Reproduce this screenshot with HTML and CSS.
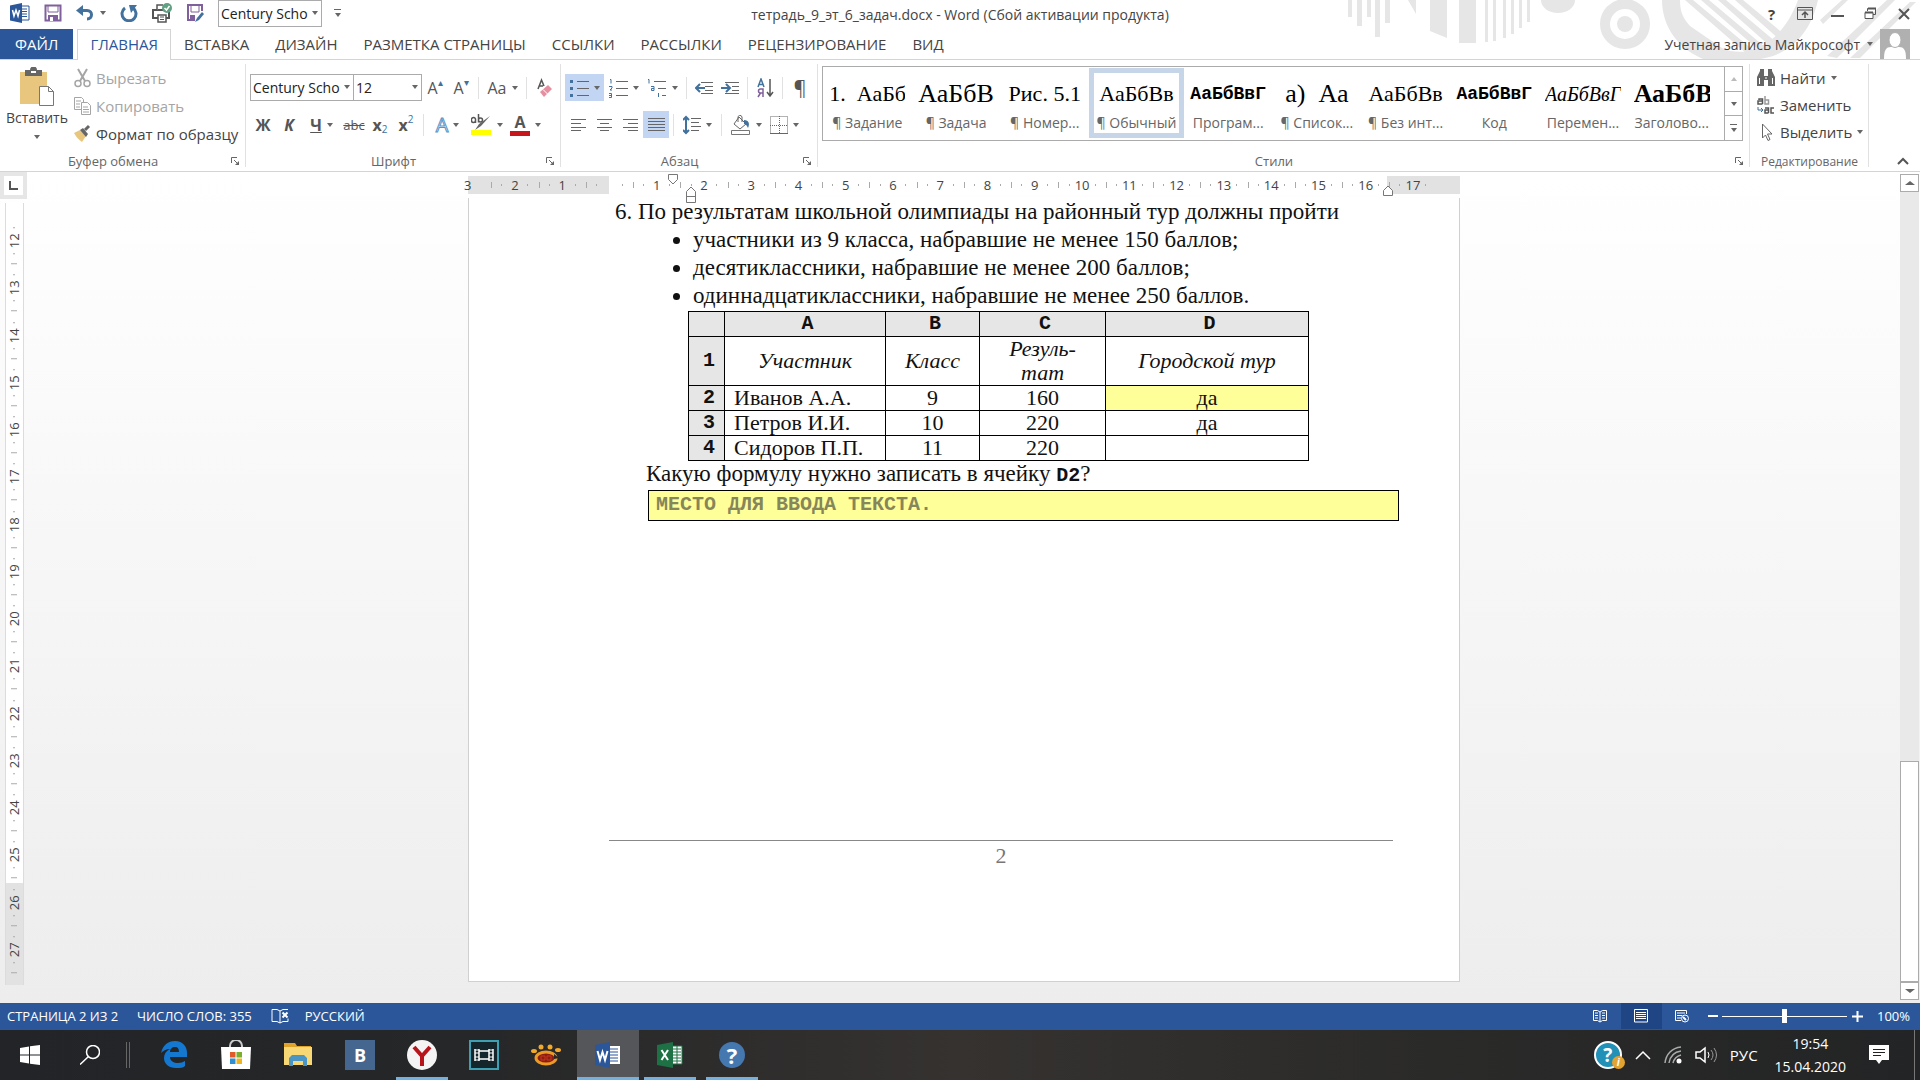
FILE: index.html
```html
<!DOCTYPE html>
<html lang="ru">
<head>
    <meta charset="UTF-8">
    <meta name="viewport" content="width=device-width, initial-scale=1.0">
    <title>тетрадь_9_эт_6_задач.docx - Word</title>
    <link rel="stylesheet" href="styles.css">
</head>
<body>
    <header class="top">
        <svg class="top-art" width="580" height="60" viewBox="0 0 580 60">
            <g fill="#e6e6e6">
                <path d="M8 0h4v17H8zM17 0h5v26h-5zM27 0h4v17h-4zM35 0h5v37h-5zM45 0h5v23h-5zM68 0h8v14zM90 0h17v38l-17-7zM119 0h17v43h-17zM145 0h3v42h-3zM153 0h3v41h-3zM163 0h3v38h-3zM171 0h3v34h-3zM179 0h3v28h-3zM187 0h3v22h-3z"/>
                <path d="M201 0h34a17 13 0 0 1-34 0z"/>
                <circle cx="285" cy="24" r="8"/>
                <path d="M322 0h18c0 12 3 18 10 26l32 22c26 12 60-4 76-48h20c-10 44-40 60-70 60h-42c-28-10-44-34-44-60z"/>
                <path d="M345 0h8l60 50-6 4zM361 0h8l56 47-5 4zM378 0h8l50 42-5 5zM395 0h8l42 35-5 5zM480 20l22-20h6l-25 24zM487 56l60-56h8l-58 58zM510 58l60-56h6l-56 56z"/>
            </g>
            <circle cx="285" cy="24" r="20" fill="none" stroke="#e6e6e6" stroke-width="10"/>
        </svg>

        <div class="titlebar">
            <div class="quick">
                <svg width="20" height="20" viewBox="0 0 20 20"><path d="M11 3h8v14h-8z" fill="#fff" stroke="#2b579a"/><path d="M12 6h5M12 8.500h5M12 11h5M12 13.500h5" stroke="#2b579a"/><path d="M0 2.500L12 0v20L0 17.500z" fill="#2b579a"/><path d="M2.500 7l1.500 6 2-6 2 6 1.500-6" fill="none" stroke="#fff" stroke-width="1.500"/></svg>
                <button class="qbtn" aria-label="Сохранить"><svg width="18" height="18" viewBox="0 0 18 18"><path d="M1.500 1.500h15v15h-15z" fill="#fff" stroke="#80609c" stroke-width="2"/><path d="M4 1v7h10V1" fill="none" stroke="#80609c"/><path d="M4 11h10v6H4z" fill="#80609c"/><path d="M6 13h3v4H6z" fill="#fff"/></svg></button>
                <button class="qbtn undo" aria-label="Отменить"><svg width="18" height="16" viewBox="0 0 18 16"><path d="M3 5.500h8c6 0 6 8.500 0 8.500" fill="none" stroke="#41719c" stroke-width="3"/><path d="M0 5.500L7 0v11z" fill="#41719c"/></svg><i class="arr"></i></button>
                <button class="qbtn" aria-label="Повторить"><svg width="18" height="18" viewBox="0 0 18 18"><path d="M5 4a7 7 0 1 0 8 0" fill="none" stroke="#41719c" stroke-width="3"/><path d="M9 1h8L11 9z" fill="#41719c"/></svg></button>
                <button class="qbtn" aria-label="Печать"><svg width="20" height="20" viewBox="0 0 20 20"><path d="M1 7h16v8H1z" fill="none" stroke="#555" stroke-width="2"/><path d="M5 7V2h6M6 12h8v7H6z" fill="#fff" stroke="#555" stroke-width="1.500"/><path d="M8 14h4M8 16.500h4" stroke="#555"/><circle cx="15" cy="5" r="5" fill="#5fa182"/><path d="M12.500 5l2 2 3-4" fill="none" stroke="#fff" stroke-width="1.500"/></svg></button>
                <button class="qbtn" aria-label="Сохранить как"><svg width="18" height="20" viewBox="0 0 18 20"><path d="M9 17H2V2h14v6" fill="none" stroke="#80609c" stroke-width="2"/><path d="M5 2v7h8V2" fill="none" stroke="#80609c"/><path d="M4 12h5v5H4z" fill="#80609c"/><path d="M9 19l2-4 5-6 2 2-5 6z" fill="#41719c"/></svg></button>
                <span class="pick pick-font"><select aria-label="Шрифт"><option>Century Scho</option></select></span>
                <button class="qbtn more" aria-label="Настройка панели"><i class="bar"></i><i class="arr"></i></button>
            </div>
            <div class="doc-title">тетрадь_9_эт_6_задач.docx - Word (Сбой активации продукта)</div>
            <div class="window-buttons">
                <button aria-label="Справка"><b>?</b></button>
                <button aria-label="Параметры ленты"><svg width="16" height="13" viewBox="0 0 16 13"><path d="M.5.5h15v12H.5zM.5 3h15" fill="none" stroke="#555"/><path d="M8 11V6M5 8l3-3 3 3" fill="none" stroke="#555" stroke-width="1.500"/></svg></button>
                <button aria-label="Свернуть"><svg width="13" height="13"><path d="M0 9h13" stroke="#555" stroke-width="2"/></svg></button>
                <button aria-label="Восстановить"><svg width="13" height="13" viewBox="0 0 13 13"><path d="M3.500 4V1.500h8v6H9" fill="none" stroke="#555"/><path d="M1 5.500h8v6H1z" fill="#fff" stroke="#555"/><path d="M1 5.500h8M4 1.500h8" stroke="#555" stroke-width="2"/></svg></button>
                <button aria-label="Закрыть"><svg width="12" height="12"><path d="M1 1l10 10M11 1L1 11" stroke="#555" stroke-width="2"/></svg></button>
            </div>
        </div>

        <nav class="tabs">
            <a href="#" class="file">ФАЙЛ</a>
            <a href="#" class="current">ГЛАВНАЯ</a>
            <a href="#">ВСТАВКА</a>
            <a href="#">ДИЗАЙН</a>
            <a href="#">РАЗМЕТКА СТРАНИЦЫ</a>
            <a href="#">ССЫЛКИ</a>
            <a href="#">РАССЫЛКИ</a>
            <a href="#">РЕЦЕНЗИРОВАНИЕ</a>
            <a href="#">ВИД</a>
            <button class="account">Учетная запись Майкрософт <i class="arr"></i></button>
            <svg class="avatar" width="30" height="30" viewBox="0 0 30 30"><path d="M0 0h30v30H0z" fill="#b0b0b0"/><path d="M4 30c0-9 2-12 7-12h8c5 0 7 3 7 12z" fill="#fff"/><ellipse cx="15" cy="11" rx="6" ry="7.500" fill="#fff" stroke="#b0b0b0"/></svg>
        </nav>
    </header>

    <section class="ribbon">
        <div class="group clipboard">
            <div class="clip-body">
                <button class="paste">
                    <svg width="36" height="40" viewBox="0 0 36 40"><path d="M1 5h27v32H1z" fill="#e8c67e"/><path d="M6 3h5a3.500 3.500 0 0 1 7 0h5v6H6z" fill="#666"/><path d="M12 4h5v2h-5z" fill="#fff"/><path d="M20.500 19.500h9l5 5v14h-14z" fill="#fff" stroke="#777"/><path d="M29.500 19.500v5h5" fill="none" stroke="#777"/></svg>
                    <span>Вставить</span>
                    <i class="arr"></i>
                </button>
                <div class="stack">
                    <button class="line off"><svg width="17" height="20" viewBox="0 0 17 20"><path d="M4 1l7 12M13 1L6 13" stroke="#a5a5a5" stroke-width="2"/><circle cx="4" cy="15.500" r="3" fill="none" stroke="#a5a5a5" stroke-width="1.500"/><circle cx="13" cy="15.500" r="3" fill="none" stroke="#a5a5a5" stroke-width="1.500"/></svg>Вырезать</button>
                    <button class="line off"><svg width="17" height="20" viewBox="0 0 17 20"><path d="M.5 1.500h7l2 2v10h-9z" fill="#fff" stroke="#a5a5a5"/><path d="M7.500 6.500h6l3 3v9h-9z" fill="#fff" stroke="#a5a5a5"/><path d="M2 5h5M2 8h4M2 11h4M9 11h5M9 13.500h6M9 16h6" stroke="#a5a5a5"/></svg>Копировать</button>
                    <button class="line"><svg width="17" height="20" viewBox="0 0 17 20"><path d="M0 9l6-3 6 6-4 6c-3-2-6-5-8-9z" fill="#e8c67e"/><path d="M6 6l3-2 5 6-2 3z" fill="#666"/><path d="M11 6l4-4" stroke="#666" stroke-width="3"/></svg>Формат по образцу</button>
                </div>
            </div>
            <div class="foot">Буфер обмена<button class="launch" aria-label="Буфер обмена"><svg width="9" height="9"><path d="M.5 6V.5H6M3 3l4 4" fill="none" stroke="#666"/><path d="M8 4v4H4z" fill="#666"/></svg></button></div>
        </div>

        <div class="group font">
            <div class="row">
                <span class="pick pick-font"><select aria-label="Шрифт"><option>Century Scho</option></select></span>
                <span class="pick pick-size"><select aria-label="Размер шрифта"><option>12</option></select></span>
                <button class="tool">A<sup>▴</sup></button>
                <button class="tool">A<sup>▾</sup></button>
                <i class="sep"></i>
                <button class="tool split">Aa<i class="arr"></i></button>
                <i class="sep"></i>
                <button class="tool" aria-label="Очистить формат"><svg width="17" height="20" viewBox="0 0 17 20"><path d="M2 11L5.500 2 8 8M3 8h4" fill="none" stroke="#555" stroke-width="1.500"/><path d="M4 14l8-7 4 4-8 8z" fill="#e58fa0"/><path d="M7 11.500l4.500 4.500" stroke="#fff"/></svg></button>
            </div>
            <div class="row">
                <button class="tool"><b>Ж</b></button>
                <button class="tool"><b><em>К</em></b></button>
                <button class="tool split"><b><u>Ч</u></b><i class="arr"></i></button>
                <button class="tool strike"><s>abc</s></button>
                <button class="tool"><b>x</b><sub>2</sub></button>
                <button class="tool"><b>x</b><sup>2</sup></button>
                <i class="sep"></i>
                <button class="tool split"><span class="glow">A</span><i class="arr"></i></button>
                <button class="tool split" aria-label="Цвет выделения"><svg width="21" height="22" viewBox="0 0 21 22"><path d="M0 16h20v5H0z" fill="#ff0"/><path d="M4.500 5a2 2 0 0 0-4 1.500 2 2 0 0 0 4 0zV9M7.500 0v8.500M7.500 6a2 2 0 1 1 4 0 2 2 0 0 1-4 0" fill="none" stroke="#555" stroke-width="1.500"/><path d="M19 2l-9 10-6 4 4-6z" fill="#666"/></svg><i class="arr"></i></button>
                <button class="tool split"><span class="red">A</span><i class="arr"></i></button>
            </div>
            <div class="foot">Шрифт<button class="launch" aria-label="Шрифт"><svg width="9" height="9"><path d="M.5 6V.5H6M3 3l4 4" fill="none" stroke="#666"/><path d="M8 4v4H4z" fill="#666"/></svg></button></div>
        </div>

        <div class="group para">
            <div class="row">
                <button class="tool split on" aria-label="Маркеры"><svg width="19" height="20"><path d="M7 3.500h12M7 10.500h12M7 17.500h12" stroke="#666"/><path d="M0 2h3v3H0zM0 9h3v3H0zM0 16h3v3H0z" fill="#41719c"/></svg><i class="arr"></i></button>
                <button class="tool split" aria-label="Нумерация"><svg width="19" height="20"><path d="M7 3.500h12M7 10.500h12M7 17.500h12" stroke="#666"/><path d="M1 1.500h1v4M0 8.500h3v1.500l-2 2h2M0 15.500h2.500v4H0M0 17.500h2.500" fill="none" stroke="#41719c"/></svg><i class="arr"></i></button>
                <button class="tool split" aria-label="Многоуровневый список"><svg width="20" height="20"><path d="M7 3.500h12M11 10.500h8M15 17.500h4" stroke="#666"/><path d="M1 1.500h1v4M4 8.500h3v4H4.500v-2H7M11.500 15v4" fill="none" stroke="#41719c"/></svg><i class="arr"></i></button>
                <i class="sep"></i>
                <button class="tool" aria-label="Уменьшить отступ"><svg width="18" height="14"><path d="M6 1.500h12M10 5.500h8M10 9.500h8M6 12.500h12" stroke="#666"/><path d="M1 7h9M5 3L1 7l4 4" fill="none" stroke="#41719c" stroke-width="2"/></svg></button>
                <button class="tool" aria-label="Увеличить отступ"><svg width="18" height="14"><path d="M4 1.500h14M11 5.500h7M11 9.500h7M4 12.500h14" stroke="#666"/><path d="M0 7h8M5 3l4 4-4 4" fill="none" stroke="#41719c" stroke-width="2"/></svg></button>
                <i class="sep"></i>
                <button class="tool" aria-label="Сортировка"><svg width="17" height="20" viewBox="0 0 17 20"><path d="M1 9l3-8 3 8M2 6.500h4" fill="none" stroke="#41719c" stroke-width="1.500"/><path d="M6 19v-8H3.500a2 2 0 0 0 0 4H6M3.500 15L1 19" fill="none" stroke="#80609c" stroke-width="1.500"/><path d="M13 1v17M10 14l3 4 3-4" fill="none" stroke="#555" stroke-width="1.500"/></svg></button>
                <i class="sep"></i>
                <button class="tool pilcrow">¶</button>
            </div>
            <div class="row">
                <button class="tool" aria-label="По левому краю"><svg width="15" height="14"><path d="M0 1.500h15M0 5.500h10M0 9.500h15M0 12.500h10" stroke="#666"/></svg></button>
                <button class="tool" aria-label="По центру"><svg width="15" height="14"><path d="M0 1.500h15M3 5.500h9M0 9.500h15M3 12.500h9" stroke="#666"/></svg></button>
                <button class="tool" aria-label="По правому краю"><svg width="15" height="14"><path d="M0 1.500h15M5 5.500h10M0 9.500h15M5 12.500h10" stroke="#666"/></svg></button>
                <button class="tool on" aria-label="По ширине"><svg width="17" height="14"><path d="M0 .5h17M0 3.500h17M0 6.500h17M0 9.500h17M0 12.500h17" stroke="#666"/></svg></button>
                <i class="sep"></i>
                <button class="tool split" aria-label="Интервал"><svg width="18" height="20"><path d="M8 3.500h10M8 7.500h8M8 11.500h10M8 15.500h8" stroke="#666"/><path d="M3 2v16M0 5l3-3 3 3M0 15l3 3 3-3" fill="none" stroke="#41719c" stroke-width="2"/></svg><i class="arr"></i></button>
                <i class="sep"></i>
                <button class="tool split" aria-label="Заливка"><svg width="21" height="20" viewBox="0 0 21 20"><path d="M1.500 15.500h18v4h-18z" fill="#fff" stroke="#777"/><path d="M9 2l7 7-6 5-6-5z" fill="#fff" stroke="#666"/><path d="M8 7V3a2 2 0 0 1 4-1v5" fill="none" stroke="#666"/><path d="M14 5c5 0 6 4 4 8-1-2-2-4-4-4z" fill="#41719c"/></svg><i class="arr"></i></button>
                <button class="tool split" aria-label="Границы"><svg width="18" height="18"><path d="M.5.5h17v17H.5zM9.500 0v18M0 9.500h18" fill="none" stroke="#666" stroke-dasharray="1 1"/><path d="M0 17.500h18" stroke="#666"/></svg><i class="arr"></i></button>
            </div>
            <div class="foot">Абзац<button class="launch" aria-label="Абзац"><svg width="9" height="9"><path d="M.5 6V.5H6M3 3l4 4" fill="none" stroke="#666"/><path d="M8 4v4H4z" fill="#666"/></svg></button></div>
        </div>

        <div class="group styles">
            <div class="gallery">
                <button class="style"><span class="demo serif">1. &nbsp;АаБб</span><span>¶ Задание</span></button>
                <button class="style"><span class="demo serif large">АаБбВ</span><span>¶ Задача</span></button>
                <button class="style"><span class="demo serif">Рис. 5.1</span><span>¶ Номер...</span></button>
                <button class="style picked"><span class="demo serif">АаБбВв</span><span>¶ Обычный</span></button>
                <button class="style"><span class="demo mono">АаБбВвГ</span><span>Програм...</span></button>
                <button class="style"><span class="demo serif large">а) &nbsp;Аа</span><span>¶ Список...</span></button>
                <button class="style"><span class="demo serif">АаБбВв</span><span>¶ Без инт...</span></button>
                <button class="style"><span class="demo mono">АаБбВвГ</span><span>Код</span></button>
                <button class="style"><span class="demo serif slant">АаБбВвГ</span><span>Перемен...</span></button>
                <button class="style"><span class="demo serif large heavy">АаБбВ</span><span>Заголово...</span></button>
                <div class="gallery-nav">
                    <button aria-label="Вверх"><i class="arr up pale"></i></button>
                    <button aria-label="Вниз"><i class="arr"></i></button>
                    <button aria-label="Все стили"><i class="bar"></i><i class="arr"></i></button>
                </div>
            </div>
            <div class="foot">Стили<button class="launch" aria-label="Стили"><svg width="9" height="9"><path d="M.5 6V.5H6M3 3l4 4" fill="none" stroke="#666"/><path d="M8 4v4H4z" fill="#666"/></svg></button></div>
        </div>

        <div class="group editing">
            <div class="stack">
                <button class="line"><svg width="18" height="18" viewBox="0 0 18 18"><path d="M0 17V8l3-6h4v5h4V2h4l3 6v9h-7v-6H7v6z" fill="#666"/><path d="M3 1h4M11 1h4" stroke="#666" stroke-width="2"/><path d="M2.500 9v6M15.500 9v6M8 9h2" stroke="#fff"/></svg>Найти<i class="arr"></i></button>
                <button class="line"><svg width="18" height="18" viewBox="0 0 18 18"><path d="M5.500 8V3H2v1M5.500 5H1v3h4.500" fill="none" stroke="#555" stroke-width="1.500"/><path d="M8 0v8h3.500V4H8" fill="none" stroke="#999" stroke-width="1.500"/><path d="M1 11v3h5M4 12l2 2-2 2" fill="none" stroke="#41719c"/><path d="M11.500 17v-5H8M11.500 14H8v3h3.500M17 12h-3v5h3" fill="none" stroke="#555" stroke-width="1.500"/></svg>Заменить</button>
                <button class="line"><svg width="18" height="18" viewBox="0 0 18 18"><path d="M5.500 1v14l3-3 2.500 5.500 2-1-2.500-5.500H15z" fill="#fff" stroke="#666"/></svg>Выделить<i class="arr"></i></button>
            </div>
            <div class="foot">Редактирование</div>
        </div>
        <button class="collapse" aria-label="Свернуть ленту"><svg width="12" height="8"><path d="M1 7l5-5 5 5" fill="none" stroke="#555" stroke-width="2"/></svg></button>
    </section>

    <main class="workspace">
        <div class="rail">
            <button class="corner" aria-label="Табуляция"><svg width="9" height="9"><path d="M1 0v8h8" fill="none" stroke="#555" stroke-width="2"/></svg></button>
            <div class="v-ruler">
                <span>12</span><span>13</span><span>14</span><span>15</span><span>16</span><span>17</span><span>18</span><span>19</span><span>20</span><span>21</span><span>22</span><span>23</span><span>24</span><span>25</span><span>26</span><span>27</span>
            </div>
        </div>

        <div class="canvas">
            <div class="h-ruler">
                <div class="marks">
                    <span>3</span><span>2</span><span>1</span><span></span><span>1</span><span>2</span><span>3</span><span>4</span><span>5</span><span>6</span><span>7</span><span>8</span><span>9</span><span>10</span><span>11</span><span>12</span><span>13</span><span>14</span><span>15</span><span>16</span><span>17</span><span></span>
                </div>
                <svg class="indent first" width="12" height="11"><path d="M1.500.5h9v5L6 10 1.500 5.500z" fill="#fff" stroke="#777"/></svg>
                <svg class="indent left" width="12" height="17"><path d="M1.500 5.500L6 1l4.500 4.500v11h-9zM1.500 10.500h9" fill="#fff" stroke="#777"/></svg>
                <svg class="indent right" width="12" height="11"><path d="M1.500 10.500v-5L6 1l4.500 4.500v5z" fill="#fff" stroke="#777"/></svg>
            </div>

            <article class="sheet">
                <p class="task">6. По результатам школьной олимпиады на районный тур должны пройти</p>
                <ul>
                    <li>участники из 9 класса, набравшие не менее 150 баллов;</li>
                    <li>десятиклассники, набравшие не менее 200 баллов;</li>
                    <li>одиннадцатиклассники, набравшие не менее 250 баллов.</li>
                </ul>
                <table>
                    <colgroup><col class="c-n"><col class="c-a"><col class="c-b"><col class="c-c"><col class="c-d"></colgroup>
                    <tr><th></th><th>A</th><th>B</th><th>C</th><th>D</th></tr>
                    <tr class="names"><th>1</th><td>Участник</td><td>Класс</td><td>Резуль-<br>тат</td><td>Городской тур</td></tr>
                    <tr><th>2</th><td class="who">Иванов А.А.</td><td>9</td><td>160</td><td class="answer">да</td></tr>
                    <tr><th>3</th><td class="who">Петров И.И.</td><td>10</td><td>220</td><td>да</td></tr>
                    <tr><th>4</th><td class="who">Сидоров П.П.</td><td>11</td><td>220</td><td></td></tr>
                </table>
                <label class="question" for="formula">Какую формулу нужно записать в ячейку <b>D2</b>?</label>
                <input id="formula" class="formula" type="text" placeholder="МЕСТО ДЛЯ ВВОДА ТЕКСТА.">
                <div class="page-foot">2</div>
            </article>
        </div>

        <div class="scroll">
            <button aria-label="Вверх"><i class="arr up wide"></i></button>
            <div class="track"><div class="thumb"></div></div>
            <button aria-label="Вниз"><i class="arr wide"></i></button>
        </div>
    </main>

    <footer class="status">
        <span>СТРАНИЦА 2 ИЗ 2</span>
        <span>ЧИСЛО СЛОВ: 355</span>
        <svg width="18" height="16" viewBox="0 0 18 16"><path d="M1 1.500h5l3 1.500v12l-3-1.500H1zM9 3l3-1.500h5M9 15l3-1.500h5v-3" fill="none" stroke="#fff"/><path d="M11.500 4.500l5 5M16.500 4.500l-5 5" stroke="#fff" stroke-width="2"/></svg>
        <span>РУССКИЙ</span>
        <div class="views">
            <button aria-label="Режим чтения"><svg width="14" height="14"><path d="M.5 1.500h4L7 3l2.500-1.500h4v10h-4L7 13l-2.500-1.500h-4zM7 3v10M2 4h3M2 6.500h3M2 9h3M9 4h3M9 6.500h3M9 9h3" fill="none" stroke="#fff"/></svg></button>
            <button class="active" aria-label="Разметка страницы"><svg width="14" height="14"><path d="M.5.500h13v12.500H.5zM2 3.500h10M2 5.500h10M2 7.500h10M2 9.500h10" fill="none" stroke="#fff"/></svg></button>
            <button aria-label="Веб-документ"><svg width="14" height="14"><path d="M6 11.500H.5V1.500h11V5M2 4h8M2 6.500h5M2 9h4" fill="none" stroke="#fff"/><circle cx="10" cy="9.500" r="3.500" fill="none" stroke="#fff"/><path d="M8 8l3 3" stroke="#fff" stroke-width="2"/></svg></button>
        </div>
        <button class="zoom-btn" aria-label="Уменьшить"><svg width="10" height="10"><path d="M0 5h10" stroke="#fff" stroke-width="2"/></svg></button>
        <input class="zoom" type="range" min="0" max="100" value="50" aria-label="Масштаб">
        <button class="zoom-btn" aria-label="Увеличить"><svg width="11" height="11"><path d="M0 5.500h11M5.500 0v11" stroke="#fff" stroke-width="2"/></svg></button>
        <span class="percent">100%</span>
    </footer>

    <div class="taskbar">
        <button class="start" aria-label="Пуск"><svg width="20" height="20"><path d="M0 3l9-1.500V9.500H0zM10 1.300L20 0v9.500H10zM0 10.500h9v8L0 17zM10 10.500h10V20l-10-1.300z" fill="#fff"/></svg></button>
        <button class="find" aria-label="Поиск"><svg width="20" height="20"><circle cx="13" cy="7" r="6.500" fill="none" stroke="#fff" stroke-width="1.500"/><path d="M8.500 11.500L0 19.500" stroke="#fff" stroke-width="1.500"/></svg></button>
        <i class="grip"></i>
        <div class="apps">
            <button aria-label="Edge"><svg width="26" height="28" viewBox="0 0 26 28"><path d="M0 12C2 4 7 0 14 0c8 0 12 6 12 12v4H9c0 4 4 6 8 6 3 0 5-1 7-2v5c-2 2-5 2-9 2C8 27 3 23 3 17c0-4 2-7 6-9-4 0-7 2-9 4zM9 11h9c0-3-1-5-4-5s-5 2-5 5z" fill="#1478d0" fill-rule="evenodd"/></svg></button>
            <button aria-label="Store"><svg width="30" height="30" viewBox="0 0 30 30"><path d="M9 9V6a6 6 0 0 1 12 0v3" fill="none" stroke="#ccc" stroke-width="2"/><path d="M0 7h30l-1 22H1z" fill="#fff"/><path d="M9 12h5.500v5.500H9z" fill="#e05a2a"/><path d="M15.500 12H21v5.500h-5.500z" fill="#7aae2c"/><path d="M9 18.500h5.500V24H9z" fill="#2f8fd0"/><path d="M15.500 18.500H21V24h-5.500z" fill="#f0b41e"/></svg></button>
            <button aria-label="Проводник"><svg width="28" height="26" viewBox="0 0 28 26"><path d="M0 1h11l2 3h14v18H0z" fill="#dfa32b"/><path d="M0 5h28v18H0z" fill="#f8d775"/><path d="M5 24v-8l3-3h12l3 3v8h-4v-5H9v5z" fill="#4a95c4"/></svg></button>
            <button aria-label="ВКонтакте"><b class="vk">B</b></button>
            <button class="open" aria-label="Яндекс"><svg width="30" height="30"><circle cx="15" cy="15" r="15" fill="#f4f4f4"/><path d="M7 7l8 9 8-9M15 15v11" fill="none" stroke="#b7141c" stroke-width="4"/></svg></button>
            <button aria-label="Видеоредактор"><svg width="30" height="30"><path d="M1 1h28v28H1z" fill="#14252b" stroke="#3fa0b4" stroke-width="2"/><path d="M6 9v12M10 9v12M20 9v12M24 9v12M10 11h10M10 19h10" stroke="#fff" stroke-width="1.500"/><path d="M6 10h4M6 13h4M6 17h4M6 20h4M20 10h4M20 13h4M20 17h4M20 20h4" stroke="#fff"/></svg></button>
            <button aria-label="GOM"><svg width="30" height="24" viewBox="0 0 30 24"><ellipse cx="15" cy="15" rx="10" ry="6" fill="#8d1d12" stroke="#eb9b26" stroke-width="3"/><path d="M23 11l5 4-5 1z" fill="#26282a"/><path d="M10 13h4v4h-4zM16 13h4v4h-4z" fill="none" stroke="#c4381c"/><g fill="#f0a92c"><ellipse cx="3" cy="8" rx="3" ry="2"/><circle cx="10" cy="4" r="2.500"/><circle cx="19" cy="4" r="2.500"/><ellipse cx="27" cy="7" rx="3" ry="2"/></g></svg></button>
            <button class="open front" aria-label="Word"><svg width="26" height="26" viewBox="0 0 26 26"><path d="M13 4h12v18H13z" fill="#fff"/><path d="M15 7h8M15 10h8M15 13h8M15 16h8M15 19h8" stroke="#2b579a"/><path d="M0 3l15-3v26L0 23z" fill="#2b579a"/><path d="M2.500 9l2.500 9 2.500-8L10 18l2.500-9" fill="none" stroke="#fff" stroke-width="2"/></svg></button>
            <button class="open" aria-label="Excel"><svg width="26" height="26" viewBox="0 0 26 26"><path d="M15 4h10v18H15z" fill="#fff" stroke="#1e7145"/><path d="M16 7h8M16 10h8M16 13h8M16 16h8M16 19h8M20 4v18" stroke="#1e7145"/><path d="M0 3l16-3v26L0 23z" fill="#1e7145"/><path d="M4.500 8l6.500 10M11 8L4.500 18" stroke="#fff" stroke-width="2"/></svg></button>
            <button class="open" aria-label="Справка"><b class="help">?</b></button>
        </div>
        <div class="tray">
            <span class="tray-help"><b>?</b><i>i</i></span>
            <svg width="16" height="10"><path d="M1 9l7-7 7 7" fill="none" stroke="#fff" stroke-width="1.500"/></svg>
            <svg width="18" height="18"><path d="M1 17C2 8 8 2 17 1M5 17c1-6 5-11 12-12M9 17c1-4 4-7 8-8" fill="none" stroke="#aaa" stroke-width="1.500"/><circle cx="15" cy="15" r="2.500" fill="#fff"/></svg>
            <svg width="22" height="18"><path d="M1 6h4l5-4v14l-5-4H1z" fill="none" stroke="#fff" stroke-width="1.500"/><path d="M13 6q2 3 0 6" fill="none" stroke="#fff"/><path d="M16 4q4 5 0 10M19 2q5 7 0 14" fill="none" stroke="#999"/></svg>
            <span>РУС</span>
            <div class="clock"><span>19:54</span><span>15.04.2020</span></div>
            <button aria-label="Уведомления"><svg width="20" height="20"><path d="M0 0h20v15h-7l-3 4-3-4H0z" fill="#fff"/><path d="M4 4.500h12M4 7.500h12M4 10.500h8" stroke="#222"/></svg></button>
        </div>
    </div>
</body>
</html>
```
FILE: styles.css
```css
* {
    box-sizing: border-box;
}
body {
    margin: 0;
    min-height: 100vh;
    display: flex;
    flex-direction: column;
    font-family: "Open Sans", "Noto Sans", sans-serif;
    font-size: 15px;
    color: #444;
    background: #fff;
}
button {
    margin: 0;
    padding: 0;
    border: 0;
    background: none;
    font: inherit;
    color: inherit;
}
p, ul {
    margin: 0;
    padding: 0;
}
svg {
    flex: none;
}

/* small shared bits */
.arr {
    display: inline-block;
    border: 3px solid transparent;
    border-top: 4px solid #666;
    border-bottom: 0;
}
.arr.up {
    border-top: 0;
    border-bottom: 4px solid #666;
}
.arr.pale {
    border-bottom-color: #bbb;
}
.arr.wide {
    border-left-width: 5px;
    border-right-width: 5px;
}
.bar {
    width: 7px;
    height: 1px;
    margin-bottom: 3px;
    background: #666;
}
.pick {
    position: relative;
    height: 27px;
}
.pick::after {
    content: "";
    position: absolute;
    right: 4px;
    top: 11px;
    border: 3px solid transparent;
    border-top: 4px solid #666;
    border-bottom: 0;
}
.pick select {
    width: 100%;
    height: 100%;
    padding: 0 2px;
    appearance: none;
    border: 1px solid #ababab;
    border-radius: 0;
    background: #fff;
    font: inherit;
    font-size: 14px;
    color: #222;
}
.pick-font {
    width: 104px;
}
.pick-size {
    width: 69px;
    margin-left: -1px;
}

/* title and tabs */
.top {
    position: relative;
}
.top-art {
    position: absolute;
    right: 0;
    top: 0;
}
.titlebar {
    position: relative;
    display: grid;
    grid-template-columns: 1fr auto 1fr;
    height: 29px;
}
.quick {
    display: flex;
    align-items: center;
    height: 26px;
    padding-left: 10px;
    gap: 14px;
}
.qbtn {
    display: flex;
    align-items: center;
}
.undo {
    gap: 6px;
}
.more {
    flex-direction: column;
    margin-left: -2px;
}
.doc-title {
    font-size: 14px;
    line-height: 30px;
}
.window-buttons {
    display: flex;
    justify-content: flex-end;
    align-items: center;
    height: 27px;
}
.window-buttons button {
    width: 33px;
    height: 27px;
    display: flex;
    align-items: center;
    justify-content: center;
}
.tabs {
    position: relative;
    display: flex;
    height: 31px;
    border-bottom: 1px solid #d4d4d4;
}
.tabs a {
    padding: 0 13px;
    line-height: 31px;
    color: #444;
    text-decoration: none;
}
.tabs .file {
    margin-right: 4px;
    padding: 0 15px;
    background: #2b579a;
    color: #fff;
}
.tabs .current {
    height: 31px;
    padding: 0 12px;
    border: 1px solid #d4d4d4;
    border-bottom: 0;
    background: #fff;
    color: #2b579a;
    line-height: 29px;
}
.account {
    display: flex;
    align-items: center;
    gap: 7px;
    margin-left: auto;
    font-size: 14px;
}
.avatar {
    margin: 0 10px 0 7px;
}

/* ribbon */
.ribbon {
    display: flex;
    height: 112px;
    border-bottom: 1px solid #d4d4d4;
}
.group {
    display: flex;
    flex-direction: column;
    position: relative;
    padding: 14px 4px 0;
}
.group::after {
    content: "";
    position: absolute;
    right: 0;
    top: 4px;
    bottom: 4px;
    border-right: 1px solid #e1e1e1;
}
.row {
    display: flex;
    align-items: center;
    height: 27px;
    margin-bottom: 10px;
}
.foot {
    display: flex;
    align-items: center;
    justify-content: center;
    height: 20px;
    margin-top: auto;
    padding-right: 20px;
    font-size: 13px;
    color: #666;
}
.launch {
    position: absolute;
    right: 6px;
    bottom: 5px;
    display: flex;
}
.clipboard {
    width: 246px;
    padding-top: 4px;
}
.clip-body {
    display: flex;
}
.paste {
    width: 66px;
    display: flex;
    flex-direction: column;
    align-items: center;
    padding-top: 3px;
    font-size: 14px;
    line-height: 22px;
}
.paste .arr {
    margin-top: 6px;
}
.stack {
    display: flex;
    flex-direction: column;
}
.line {
    display: flex;
    align-items: center;
    gap: 5px;
    height: 28px;
    white-space: nowrap;
}
.off {
    color: #a5a5a5;
}
.clipboard .stack {
    margin-left: 4px;
}
.font {
    width: 315px;
}
.para {
    width: 257px;
}
.tool {
    width: 26px;
    height: 27px;
    display: flex;
    align-items: center;
    justify-content: center;
    font-size: 16px;
    color: #555;
}
.split {
    width: 39px;
    gap: 5px;
}
.on {
    background: #c2d5f2;
}
.sep {
    width: 1px;
    height: 22px;
    margin: 0 4px;
    background: #e1e1e1;
}
.tool sup, .tool sub {
    font-size: 10px;
    line-height: 10px;
    color: #41719c;
}
.tool sup {
    align-self: flex-start;
    margin-top: 3px;
}
.tool sub {
    align-self: flex-end;
    margin-bottom: 4px;
}
.strike {
    font-size: 13px;
}
.glow {
    font-size: 20px;
    color: #fff;
    -webkit-text-stroke: 1px #5b93c7;
}
.red {
    width: 20px;
    height: 22px;
    border-bottom: 5px solid #c8161d;
    font-weight: bold;
    line-height: 17px;
    text-align: center;
}
.pilcrow {
    font-size: 20px;
}
.styles {
    flex: 1;
    min-width: 0;
    padding-top: 6px;
}
.gallery {
    display: flex;
    height: 75px;
    border: 1px solid #ababab;
    margin-right: 3px;
}
.style {
    flex: 1;
    min-width: 0;
    display: flex;
    flex-direction: column;
    align-items: center;
    padding-top: 10px;
    border: 2px solid transparent;
    overflow: hidden;
    white-space: nowrap;
    font-size: 14px;
    color: #666;
}
.picked {
    margin: 1px 0 2px;
    padding-top: 6px;
    border: 5px solid #c6d5e8;
}
.demo {
    width: 76px;
    height: 30px;
    margin-bottom: 4px;
    overflow: hidden;
    line-height: 30px;
    color: #000;
}
.serif {
    font-family: "Liberation Serif", serif;
    font-size: 22px;
}
.large {
    font-size: 26px;
}
.heavy {
    font-weight: bold;
}
.slant {
    font-size: 20px;
    font-style: italic;
}
.mono {
    font-family: "Liberation Mono", monospace;
    font-size: 18px;
    font-weight: bold;
}
.gallery-nav {
    width: 18px;
    margin-left: 8px;
    display: flex;
    flex-direction: column;
    border-left: 1px solid #ababab;
}
.gallery-nav button {
    flex: 1;
    display: flex;
    flex-direction: column;
    align-items: center;
    justify-content: center;
}
.gallery-nav button + button {
    border-top: 1px solid #ababab;
}
.editing {
    width: 119px;
    padding: 4px 7px 0;
}
.editing .line {
    height: 27px;
}
.editing .foot {
    padding: 0;
    font-size: 12px;
}
.collapse {
    width: 51px;
    padding: 0 11px 6px 0;
    display: flex;
    justify-content: flex-end;
    align-items: flex-end;
}

/* document area */
.workspace {
    flex: 1;
    display: flex;
    background: linear-gradient(#fff, #ededed);
}
.rail {
    width: 28px;
    display: flex;
    flex-direction: column;
}
.corner {
    width: 27px;
    height: 27px;
    display: flex;
    align-items: center;
    justify-content: center;
    border: 4px solid #e6e6e6;
    background: #fff;
}
.v-ruler {
    flex: 1;
    width: 19px;
    margin: 4px 0 18px 5px;
    padding: 14px 0 12px;
    display: flex;
    flex-direction: column;
    border: solid #dcdcdc;
    border-width: 0 1px;
    background: linear-gradient(#fff 87%, #e2e2e2 87%);
}
.v-ruler span {
    flex: 1;
    writing-mode: vertical-rl;
    transform: rotate(180deg);
    text-align: center;
    font-size: 13px;
    line-height: 17px;
    background:
        linear-gradient(#aaa, #aaa) center top / 6px 1px no-repeat,
        linear-gradient(#aaa, #aaa) center 22% / 2px 1px no-repeat,
        linear-gradient(#aaa, #aaa) center 78% / 2px 1px no-repeat;
}
.canvas {
    flex: 1;
    display: flex;
    flex-direction: column;
    align-items: center;
    padding: 4px 0 21px;
}
.h-ruler {
    position: relative;
    width: 992px;
    height: 18px;
    background: linear-gradient(90deg, #e2e2e2 141px, #fff 141px 919px, #e2e2e2 919px);
}
.marks {
    display: flex;
    margin: 0 -24px;
}
.marks span {
    flex: 1;
    height: 18px;
    text-align: center;
    font-size: 13px;
    line-height: 18px;
    background:
        linear-gradient(#aaa, #aaa) left center / 1px 6px no-repeat,
        linear-gradient(#aaa, #aaa) 22% center / 1px 2px no-repeat,
        linear-gradient(#aaa, #aaa) 78% center / 1px 2px no-repeat;
}
.marks span:first-child, .marks span:last-child {
    background: none;
}
.indent {
    position: absolute;
}
.first {
    left: 199px;
    top: -2px;
}
.left {
    left: 217px;
    top: 10px;
}
.right {
    left: 914px;
    top: 9px;
}
.sheet {
    flex: 1;
    width: 992px;
    margin-top: 4px;
    padding: 0 66px 0 140px;
    display: flex;
    flex-direction: column;
    border: 1px solid #d0d0d0;
    border-top: 0;
    background: #fff;
    font-family: "Liberation Serif", serif;
    font-size: 23px;
    line-height: 28px;
    color: #111;
}
.task {
    padding-left: 6px;
}
.sheet ul {
    padding-left: 84px;
    margin-bottom: 1px;
}
.sheet table {
    width: 621px;
    margin-left: 79px;
    border-collapse: collapse;
    table-layout: fixed;
    font-size: 22px;
    line-height: 24px;
}
.c-n {
    width: 36px;
}
.c-a {
    width: 161px;
}
.c-b {
    width: 94px;
}
.c-c {
    width: 126px;
}
.sheet th, .sheet td {
    height: 25px;
    padding: 0;
    border: 1px solid #000;
    text-align: center;
}
.sheet th {
    padding-left: 5px;
    background: #e6e6e6;
    font-family: "Liberation Mono", monospace;
    font-size: 20px;
}
.names td {
    font-style: italic;
}
.sheet .who {
    padding-left: 9px;
    text-align: left;
}
.sheet .answer {
    background: #ff9;
}
.question {
    padding-left: 37px;
    line-height: 26px;
}
.question b {
    font-family: "Liberation Mono", monospace;
    font-size: 20px;
    line-height: 20px;
}
.formula {
    width: 751px;
    height: 31px;
    margin: 3px 0 0 39px;
    padding: 0 7px 3px;
    border: 1px solid #000;
    background: #ff9;
    font: bold 20px "Liberation Mono", monospace;
}
.formula::placeholder {
    color: #86865a;
}
.page-foot {
    margin-top: auto;
    height: 141px;
    padding-top: 1px;
    border-top: 1px solid #888;
    font-size: 22px;
    text-align: center;
    color: #777;
}
.scroll {
    width: 20px;
    padding: 2px 1px 3px 0;
    display: flex;
    flex-direction: column;
}
.scroll button {
    height: 18px;
    display: flex;
    align-items: center;
    justify-content: center;
    border: 1px solid #ababab;
    background: #fff;
}
.track {
    flex: 1;
    display: flex;
    flex-direction: column;
    justify-content: flex-end;
    background: #e9e9e9;
}
.thumb {
    height: 28%;
    border: 1px solid #ababab;
    background: #fff;
}

/* status bar */
.status {
    display: flex;
    align-items: center;
    height: 27px;
    padding: 0 10px 1px 7px;
    gap: 19px;
    background: #2b579a;
    font-size: 13px;
    color: #fff;
}
.status svg + span {
    margin-left: -3px;
}
.views {
    display: flex;
    align-self: stretch;
    margin-left: auto;
}
.views button {
    width: 41px;
    display: flex;
    align-items: center;
    justify-content: center;
}
.views .active {
    background: #1f4585;
}
.zoom-btn {
    display: flex;
    margin: 0 -15px 0 -14px;
}
.zoom {
    width: 125px;
    height: 14px;
    margin: 0;
    appearance: none;
    background: linear-gradient(#fff, #fff) center / 100% 1px no-repeat;
}
.zoom::-webkit-slider-thumb {
    appearance: none;
    width: 5px;
    height: 14px;
    background: #fff;
}
.percent {
    margin-left: 10px;
}

/* windows taskbar */
.taskbar {
    display: flex;
    align-items: center;
    height: 50px;
    background: linear-gradient(90deg, #222427, #262728 25%, #353230 50%, #2a2a29 75%, #232425);
    color: #fff;
}
.taskbar button {
    display: flex;
    align-items: center;
    justify-content: center;
}
.start, .find {
    width: 60px;
}
.grip {
    width: 4px;
    height: 26px;
    margin: 0 13px 0 6px;
    border: solid #666;
    border-width: 0 1px;
}
.apps {
    display: flex;
    align-self: stretch;
}
.apps button {
    width: 52px;
    margin: 0 5px;
    border-bottom: 3px solid transparent;
    padding-top: 3px;
}
.apps .open {
    border-color: #76b0de;
}
.apps .front {
    width: 62px;
    margin: 0;
    background: #54565a;
}
.vk, .help {
    width: 30px;
    height: 30px;
    background: #45668e;
    font-size: 18px;
    line-height: 30px;
}
.help {
    width: 26px;
    height: 26px;
    border-radius: 50%;
    background: #4678b0;
    font-size: 22px;
    line-height: 26px;
}
.tray {
    display: flex;
    align-items: center;
    align-self: stretch;
    margin: 0 5px 0 auto;
    padding-right: 25px;
    border-right: 1px solid #777;
    gap: 13px;
}
.tray-help {
    position: relative;
    width: 28px;
    height: 28px;
    border: 2px solid #fff;
    border-radius: 50%;
    background: #2191b8;
    font-size: 19px;
    line-height: 24px;
    text-align: center;
}
.tray-help i {
    position: absolute;
    right: -5px;
    bottom: -2px;
    width: 13px;
    height: 13px;
    border-radius: 50%;
    background: #e3a332;
    font-size: 10px;
    font-weight: bold;
    line-height: 13px;
}
.clock {
    display: flex;
    flex-direction: column;
    margin: 0 10px 0 4px;
    font-size: 14px;
    line-height: 23px;
    text-align: center;
}
```
